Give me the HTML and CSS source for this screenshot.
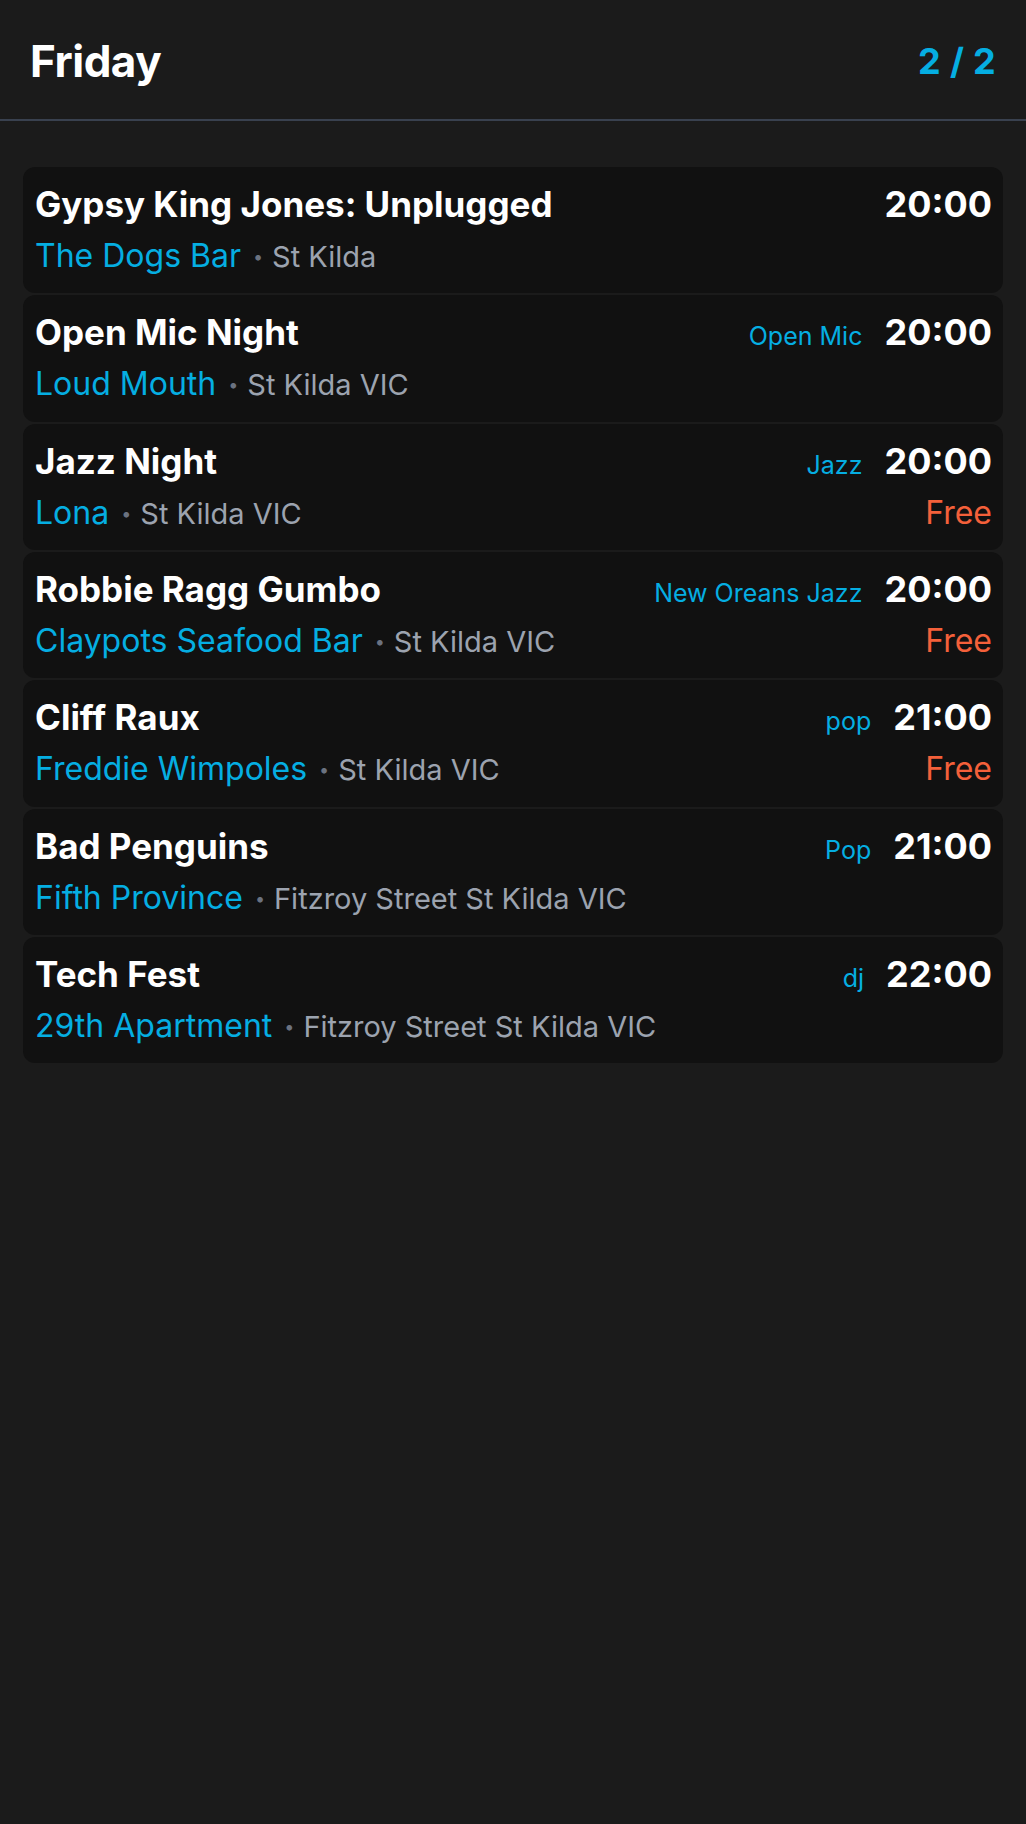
FILE: index.html
```html
<!DOCTYPE html>
<html lang="en">
<head>
<meta charset="utf-8">
<title>Friday</title>
<link rel="stylesheet" href="styles.css">
</head>
<body>
<header class="topbar">
  <h1 class="day">Friday</h1>
  <div class="pager">2 / 2</div>
</header>
<main class="list">
  <article class="event">
    <div class="row">
      <h2 class="title">Gypsy King Jones: Unplugged</h2>
      <span class="time">20:00</span>
    </div>
    <div class="row">
      <p class="place"><span class="venue">The Dogs Bar</span><span class="dot">•</span><span class="loc">St Kilda</span></p>
    </div>
  </article>
  <article class="event">
    <div class="row">
      <h2 class="title">Open Mic Night</h2>
      <span class="tag">Open Mic</span>
      <span class="time">20:00</span>
    </div>
    <div class="row">
      <p class="place"><span class="venue">Loud Mouth</span><span class="dot">•</span><span class="loc">St Kilda VIC</span></p>
    </div>
  </article>
  <article class="event">
    <div class="row">
      <h2 class="title">Jazz Night</h2>
      <span class="tag">Jazz</span>
      <span class="time">20:00</span>
    </div>
    <div class="row">
      <p class="place"><span class="venue">Lona</span><span class="dot">•</span><span class="loc">St Kilda VIC</span></p>
      <span class="price">Free</span>
    </div>
  </article>
  <article class="event">
    <div class="row">
      <h2 class="title">Robbie Ragg Gumbo</h2>
      <span class="tag">New Oreans Jazz</span>
      <span class="time">20:00</span>
    </div>
    <div class="row">
      <p class="place"><span class="venue">Claypots Seafood Bar</span><span class="dot">•</span><span class="loc">St Kilda VIC</span></p>
      <span class="price">Free</span>
    </div>
  </article>
  <article class="event">
    <div class="row">
      <h2 class="title">Cliff Raux</h2>
      <span class="tag">pop</span>
      <span class="time">21:00</span>
    </div>
    <div class="row">
      <p class="place"><span class="venue">Freddie Wimpoles</span><span class="dot">•</span><span class="loc">St Kilda VIC</span></p>
      <span class="price">Free</span>
    </div>
  </article>
  <article class="event">
    <div class="row">
      <h2 class="title">Bad Penguins</h2>
      <span class="tag">Pop</span>
      <span class="time">21:00</span>
    </div>
    <div class="row">
      <p class="place"><span class="venue">Fifth Province</span><span class="dot">•</span><span class="loc">Fitzroy Street St Kilda VIC</span></p>
    </div>
  </article>
  <article class="event">
    <div class="row">
      <h2 class="title">Tech Fest</h2>
      <span class="tag">dj</span>
      <span class="time">22:00</span>
    </div>
    <div class="row">
      <p class="place"><span class="venue">29th Apartment</span><span class="dot">•</span><span class="loc">Fitzroy Street St Kilda VIC</span></p>
    </div>
  </article>
</main>
</body>
</html>
```

FILE: styles.css
```css
* { box-sizing: border-box; }
html, body {
  margin: 0;
  padding: 0;
  background: #1b1b1b;
  font-family: Inter, "Noto Sans", "Liberation Sans", sans-serif;
  color: #fff;
}
body { min-height: 1824px; }

.topbar {
  display: flex;
  justify-content: space-between;
  align-items: flex-start;
  height: 121px;
  padding: 35px 30px 0 30px;
  border-bottom: 2px solid #39414f;
}
.day {
  margin: 0;
  font-size: 44px;
  line-height: 53px;
  font-weight: 700;
  letter-spacing: -0.5px;
}
.pager {
  font-size: 36px;
  line-height: 53px;
  font-weight: 700;
  letter-spacing: 0.3px;
  color: #05aee2;
}

.list {
  display: flex;
  flex-direction: column;
  gap: 2px;
  padding: 46px 23px 0 23px;
}
.event {
  background: #111111;
  border-radius: 12px;
  padding: 14px 11px 16px 12px;
  display: flex;
  flex-direction: column;
  gap: 8px;
  height: 126.33px;
}
.row {
  display: flex;
  align-items: baseline;
}
.title {
  flex: 1;
  margin: 0;
  font-size: 35px;
  line-height: 46px;
  font-weight: 700;
  letter-spacing: 0;
}
.tag {
  font-size: 25px;
  color: #05aee2;
  margin-right: 22px;
}
.time {
  font-size: 36px;
  line-height: 46px;
  font-weight: 700;
}
.place {
  flex: 1;
  margin: 0;
  line-height: 42px;
  white-space: nowrap;
}
.venue {
  font-size: 32px;
  color: #05aee2;
}
.dot {
  font-size: 18px;
  color: #6b7280;
  margin: 0 9px 0 12px;
  position: relative;
  top: -4px;
}
.loc {
  font-size: 29px;
  color: #9ca3af;
}
.price {
  font-size: 32px;
  line-height: 42px;
  color: #f4603a;
}
```
